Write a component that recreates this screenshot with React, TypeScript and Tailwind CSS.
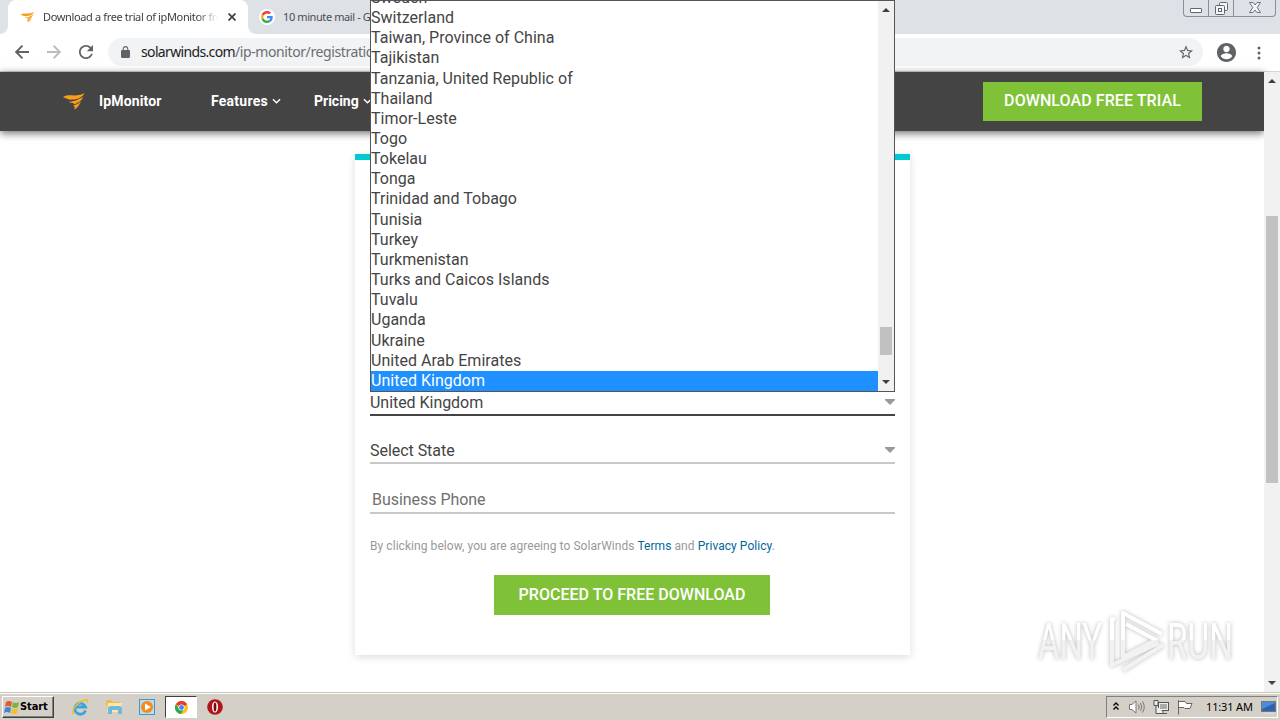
import React from "react";

const countries = [
    "Sweden",
    "Switzerland",
    "Taiwan, Province of China",
    "Tajikistan",
    "Tanzania, United Republic of",
    "Thailand",
    "Timor-Leste",
    "Togo",
    "Tokelau",
    "Tonga",
    "Trinidad and Tobago",
    "Tunisia",
    "Turkey",
    "Turkmenistan",
    "Turks and Caicos Islands",
    "Tuvalu",
    "Uganda",
    "Ukraine",
    "United Arab Emirates",
    "United Kingdom",
];

const tahoma = "font-['Noto_Sans',sans-serif]";
const roboto = "font-[Roboto,sans-serif]";

const SolarLogo: React.FC<{ className?: string }> = ({ className }) => (
    <svg viewBox="0 0 26 20" className={className} fill="#f99d1c">
        <path d="M1 6C5 3 9 4 13 4C18 4 22 3 24.500 1C23 5 18 8.500 11 8.500C7 9 5 7 1 6Z" />
        <path d="M7 11C13 11 19 8 23 5.500C22 9 18 12 14 13.500C12 11.500 9 12 7 11Z" />
        <path d="M12 15C16 14 18 12.500 20.500 10.500C19 14 17 17 13.500 19.500C14 17 14 16 12 15Z" />
    </svg>
);

const Arrow: React.FC<{ up?: boolean }> = ({ up }) => (
    <svg viewBox="0 0 8 4" className="w-2 h-1" fill="#404040">
        <path d={up ? "M0 4L4 0L8 4Z" : "M0 0H8L4 4Z"} />
    </svg>
);

const GoogleG: React.FC = () => (
    <svg viewBox="0 0 48 48" className="w-3 h-3">
        <path fill="#ea4335" d="M24 9.5c3.54 0 6.71 1.22 9.21 3.6l6.85-6.85C35.9 2.38 30.47 0 24 0 14.62 0 6.51 5.38 2.56 13.22l7.98 6.19C12.43 13.72 17.74 9.5 24 9.5z" />
        <path fill="#4285f4" d="M46.98 24.55c0-1.57-.15-3.09-.38-4.55H24v9.02h12.94c-.58 2.96-2.26 5.48-4.78 7.18l7.73 6c4.51-4.18 7.09-10.36 7.09-17.65z" />
        <path fill="#fbbc05" d="M10.53 28.59c-.48-1.45-.76-2.99-.76-4.59s.27-3.14.76-4.59l-7.98-6.19C.92 16.46 0 20.12 0 24c0 3.88.92 7.54 2.56 10.78l7.97-6.19z" />
        <path fill="#34a853" d="M24 48c6.48 0 11.93-2.13 15.89-5.81l-7.73-6c-2.15 1.45-4.92 2.3-8.16 2.3-6.26 0-11.57-4.22-13.47-9.91l-7.98 6.19C6.51 42.62 14.62 48 24 48z" />
    </svg>
);

const TabStrip: React.FC = () => (
    <div className="h-[34px] bg-[#dee1e6] flex shrink-0 overflow-hidden">
        <div className="w-2 bg-white shrink-0">
            <div className="h-full bg-[#dee1e6] rounded-br-lg" />
        </div>
        <div className="w-[240px] h-full bg-white rounded-t-lg flex items-center shrink-0">
            <SolarLogo className="w-[15px] h-3 ml-3" />
            <div className={`${tahoma} ml-2 w-[175px] text-[11px] tracking-[-0.36px] whitespace-nowrap overflow-hidden text-[#3c4043] mask-r-from-88%`}>
                Download a free trial of ipMonitor from
            </div>
            <svg viewBox="0 0 8 8" className="w-2 h-2 ml-[10px]" stroke="#3c4043" strokeWidth="1.7">
                <path d="M0.5 0.5L7.5 7.5M7.5 0.5L0.5 7.5" />
            </svg>
        </div>
        <div className="w-[122px] bg-white shrink-0">
            <div className="h-full bg-[#dee1e6] rounded-bl-lg flex items-center overflow-hidden">
                <div className="ml-[11px] w-4 h-4 rounded-full bg-white flex items-center justify-center shrink-0">
                    <GoogleG />
                </div>
                <span className={`${tahoma} ml-2 text-[11px] tracking-[-0.4px] whitespace-nowrap text-[#4a4d51]`}>10 minute mail - Go</span>
            </div>
        </div>
        <div className="ml-auto mr-[4px] h-[17px] w-[93px] flex shrink-0 border border-t-0 border-[#8a8f99] rounded-b-[4px]">
            <div className="w-[25px] border-r border-[#8a8f99] flex justify-center">
                <div className="mt-2 w-3 h-[5px] border border-[#606570] rounded-[1px] bg-white" />
            </div>
            <div className="w-[25px] border-r border-[#8a8f99] flex justify-center">
                <svg viewBox="0 0 13 13" className="w-[13px] h-[13px] mt-[2px]" fill="#f4f5f7" stroke="#606570">
                    <rect x="4.5" y="0.5" width="8" height="8" rx="1" />
                    <rect x="0.5" y="3.5" width="9" height="9" rx="1" />
                    <rect x="3.5" y="6.5" width="3" height="3" />
                </svg>
            </div>
            <div className="flex-1 flex justify-center">
                <svg viewBox="0 0 12 11" className="w-3 h-[11px] mt-[2px]" fill="#f4f5f7" stroke="#606570" strokeWidth="0.9">
                    <path d="M0.5 0.5H4L6 3L8 0.5H11.5L8.2 5.5L11.5 10.5H8L6 8L4 10.5H0.5L3.8 5.5Z" />
                </svg>
            </div>
        </div>
    </div>
);

const Toolbar: React.FC = () => (
    <div className="h-[38px] bg-white flex items-center shrink-0 border-b border-[#d5d7da]">
        <svg viewBox="0 0 14 14" className="w-[14px] h-[14px] ml-[15px] -mt-[2px]" fill="none" stroke="#5f6368" strokeWidth="1.9">
            <path d="M14 7H1.5M7.5 0.7L1.2 7L7.5 13.3" />
        </svg>
        <svg viewBox="0 0 14 14" className="w-[14px] h-[14px] ml-[18px] -mt-[2px]" fill="none" stroke="#babcbe" strokeWidth="1.9">
            <path d="M0 7H12.5M6.5 0.7L12.8 7L6.5 13.3" />
        </svg>
        <svg viewBox="4 4 16 16" className="w-[14px] h-[14px] ml-[18px] -mt-[2px]" fill="#5f6368">
            <path d="M17.65 6.35C16.2 4.9 14.21 4 12 4c-4.42 0-7.99 3.58-7.99 8s3.57 8 7.99 8c3.73 0 6.84-2.55 7.73-6h-2.08c-.82 2.33-3.04 4-5.65 4-3.31 0-6-2.69-6-6s2.69-6 6-6c1.66 0 3.14.69 4.22 1.78L13 11h7V4l-2.35 2.35z" />
        </svg>
        <div className="ml-[15px] -mt-px w-[1095px] h-7 rounded-full bg-[#f1f3f4] flex items-center">
            <svg viewBox="4 1 16 21" className="w-[9px] h-3 ml-[13px] -mt-px shrink-0" fill="#5f6368">
                <path d="M18 8h-1V6c0-2.76-2.24-5-5-5S7 3.240 7 6v2H6c-1.100 0-2 .9-2 2v10c0 1.100.9 2 2 2h12c1.100 0 2-.9 2-2V10c0-1.100-.9-2-2-2zM15.100 8H8.900V6c0-1.710 1.390-3.100 3.100-3.100s3.100 1.390 3.100 3.100v2z" />
            </svg>
            <span className={`${tahoma} ml-[11px] -mt-px w-[229px] overflow-hidden text-[14px] tracking-[-0.4px] whitespace-nowrap text-[#6a6e73]`}>
                <span className="text-[#202124] tracking-[-0.65px]">solarwinds.com</span>/ip-monitor/registration
            </span>
            <svg viewBox="2 2 20 19" className="w-[14px] h-[14px] ml-auto mr-[10px] -mt-px" fill="#5f6368">
                <path d="M22 9.240l-7.190-.62L12 2 9.190 8.630 2 9.240l5.460 4.730L5.820 21 12 17.270 18.180 21l-1.630-7.030L22 9.240zM12 15.400l-3.760 2.270 1-4.280-3.320-2.880 4.380-.38L12 6.100l1.710 4.040 4.380.38-3.320 2.880 1 4.280L12 15.400z" />
            </svg>
        </div>
        <svg viewBox="2 2 20 20" className="w-[19px] h-[19px] ml-[14px] -mt-px" fill="#5f6368">
            <path d="M12 2C6.480 2 2 6.480 2 12s4.480 10 10 10 10-4.480 10-10S17.520 2 12 2zm0 3c1.900 0 3.400 1.500 3.400 3.400S13.900 11.800 12 11.800 8.600 10.300 8.600 8.400 10.100 5 12 5zm0 14.200c-2.500 0-4.710-1.280-6-3.220.03-1.990 4-3.080 6-3.080s5.970 1.090 6 3.080c-1.290 1.940-3.500 3.220-6 3.220z" />
        </svg>
        <svg viewBox="0 0 4 14" className="w-1 h-[14px] ml-[21px]" fill="#5f6368">
            <circle cx="2" cy="2" r="1.5" />
            <circle cx="2" cy="7" r="1.5" />
            <circle cx="2" cy="12" r="1.5" />
        </svg>
    </div>
);

const Chevron: React.FC = () => (
    <svg viewBox="0 0 10 6" className="w-[9px] h-[6px] ml-1" fill="none" stroke="#fff" strokeWidth="1.5">
        <path d="M1 1L5 5L9 1" />
    </svg>
);

const SelectField: React.FC<{ value: string; active?: boolean }> = ({ value, active }) => (
    <div className={`h-[27px] flex items-center justify-between border-b-2 ${active ? "border-[#444]" : "border-[#c8c8c8]"}`}>
        <span className="pt-[2px] text-base tracking-[-0.04px] text-[#444]">{value}</span>
        <svg viewBox="0 0 10 6" className="w-[10px] h-[6px]" fill="#999">
            <path d="M0 0H10V1L5 6L0 1Z" />
        </svg>
    </div>
);

const CountryList: React.FC = () => (
    <div className="absolute left-[370px] top-0 w-[525px] h-[392px] border border-[#555] bg-white flex overflow-hidden">
        <div className="flex-1 flex flex-col justify-end overflow-hidden">
            {countries.map((name) => (
                <div
                    key={name}
                    className={`h-[20.16px] shrink-0 leading-[19px] text-base tracking-[0.02px] whitespace-nowrap ${name === "United Kingdom" ? "bg-[#1e90ff] text-white" : "text-[#444]"}`}
                >
                    {name}
                </div>
            ))}
        </div>
        <div className="w-4 bg-[#f1f1f1] flex flex-col items-center shrink-0 pt-[7px] pb-[7px]">
            <Arrow up />
            <div className="mt-auto w-3 h-7 bg-[#c1c1c1]" />
            <div className="mt-[25px] flex"><Arrow /></div>
        </div>
    </div>
);

const Watermark: React.FC = () => (
    <svg viewBox="0 0 210 76" className="absolute left-[1030px] top-[602px] w-[210px] h-[76px] drop-shadow-[0_0_2px_rgba(0,0,0,0.28)]">
        <defs>
            <linearGradient id="fade" gradientUnits="userSpaceOnUse" x1="0" y1="0" x2="0" y2="76">
                <stop offset="0.5" stopColor="#fff" />
                <stop offset="0.5" stopColor="#f2f2f2" />
            </linearGradient>
        </defs>
        <g fill="url(#fade)" fontFamily="Roboto, sans-serif" fontSize="50">
            <text x="8" y="57" textLength="64" lengthAdjust="spacingAndGlyphs">ANY</text>
            <text x="137" y="57" textLength="66" lengthAdjust="spacingAndGlyphs">RUN</text>
        </g>
        <g fill="none" stroke="url(#fade)" strokeWidth="4" strokeLinejoin="round">
            <path d="M132 32L93 11V55L126 38L96 22" />
            <path d="M85 17H82V63L129 41" />
            <path d="M93 68L133 43" />
        </g>
    </svg>
);

const Taskbar: React.FC = () => (
    <div className="h-7 bg-[#d4d0c8] border-t border-[#c8c5bc] flex items-center shrink-0 shadow-[inset_0_1px_0_#fff]">
        <div className="ml-[2px] mt-px w-[52px] h-[22px] flex items-center bg-[#d4d0c8] border border-t-white border-l-white border-r-[#404040] border-b-[#404040] shadow-[inset_-1px_-1px_0_#808080]">
            <svg viewBox="0 0 16 16" className="w-4 h-4 ml-px shrink-0">
                <path d="M2 3Q5 1 8 3L7 8Q4 6 1 8Z" fill="#e7582c" />
                <path d="M9 3Q12 5 15 3L14 8Q11 10 8 8Z" fill="#78b643" />
                <path d="M1 9Q4 7 7 9L6 14Q3 12 0 14Z" fill="#3c89d0" />
                <path d="M8 9Q11 11 14 9L13 14Q10 16 7 14Z" fill="#f5bd2f" />
            </svg>
            <span className="font-['DejaVu_Sans_Condensed','DejaVu_Sans',sans-serif] text-[11px] font-bold tracking-[-0.1px] text-black">Start</span>
        </div>
        <svg viewBox="0 0 18 18" className="w-[18px] h-[18px] ml-[17px]" fill="none">
            <path d="M14.500 12.500A5.500 5.500 0 1 1 14.500 9H5" stroke="#3ba4df" strokeWidth="2.800" />
            <path d="M3 16C-2 15 6 4 14 2Q18 1 16 5" stroke="#efbd35" strokeWidth="1.500" />
        </svg>
        <svg viewBox="0 0 18 18" className="w-[18px] h-[18px] ml-4">
            <path d="M1 2H6L8 4H15V14H2Z" fill="#e3bd55" />
            <path d="M3 5H17L15 14H2Z" fill="#ffe9a2" />
            <path d="M3 16V11Q3 8 6 8H14Q17 8 17 11V16H13V12H7V16Z" fill="#70b8de" />
        </svg>
        <svg viewBox="0 0 16 16" className="w-4 h-4 ml-4">
            <rect x="0.5" y="0.5" width="15" height="15" fill="#b9dcf3" stroke="#4e91c5" />
            <circle cx="8" cy="8" r="6" fill="#f28b1d" />
            <path d="M6 4.500L12 8L6 11.500Z" fill="#fff" />
        </svg>
        <div className="ml-[10px] mt-px w-8 h-[22px] flex items-center justify-center bg-white border border-t-[#404040] border-l-[#404040] border-r-white border-b-white">
            <svg viewBox="0 0 14 14" className="w-[13px] h-[13px]">
                <circle cx="7" cy="7" r="7" fill="#fbc116" />
                <path d="M7 7L0.900 3.500A7 7 0 0 1 13.100 3.500Z" fill="#e33b2e" />
                <path d="M0.900 3.500A7 7 0 0 0 6.500 14L9.500 8.500L4 8Z" fill="#2da94f" />
                <circle cx="7" cy="7" r="3.300" fill="#fff" />
                <circle cx="7" cy="7" r="2.600" fill="#4285f4" />
            </svg>
        </div>
        <svg viewBox="0 0 16 16" className="w-4 h-4 ml-[10px]">
            <circle cx="8" cy="8" r="7.800" fill="#b3141a" />
            <ellipse cx="8" cy="8" rx="3" ry="5.500" fill="#fff" />
            <ellipse cx="8" cy="8" rx="1.400" ry="4.500" fill="#7d080c" />
        </svg>
        <div className="ml-auto mr-[2px] mt-px w-[172px] h-[22px] flex items-center border border-t-[#808080] border-l-[#808080] border-r-white border-b-white">
            <svg viewBox="0 0 6 8" className="w-[6px] h-2 ml-[6px] -mt-[2px]" fill="none" stroke="#000" strokeWidth="1.300">
                <path d="M0.500 3.500L3 1L5.500 3.500M0.500 7.500L3 5L5.500 7.500" />
            </svg>
            <svg viewBox="0 0 16 14" className="w-4 h-[14px] ml-[10px]" fill="none" stroke="#777">
                <path d="M0.500 4.500H3L7 1V13L3 9.500H0.500Z" fill="#fff" />
                <path d="M9.500 4.500Q11 7 9.500 9.500M11.500 3Q14 7 11.500 11M13.500 1.500Q17 7 13.500 12.500" />
            </svg>
            <svg viewBox="0 0 16 16" className="w-4 h-4 ml-2" fill="#eee" stroke="#555">
                <rect x="5.500" y="3.500" width="10" height="8" />
                <rect x="7.500" y="5.500" width="6" height="4" fill="#aaa" stroke="#aaa" />
                <path d="M1 1.500H5V6.500H1ZM3 7V14.500H12.500M10 12V14M7 14.500H14" />
            </svg>
            <svg viewBox="0 0 16 16" className="w-4 h-4 ml-2" fill="#fff" stroke="#666">
                <path d="M1.500 1V15.500M2 2.500H8L9.500 4.500H15L13 9.500H8L7 8.500H2" />
            </svg>
            <span className={`${tahoma} ml-[13px] text-[11px] tracking-[-0.15px] text-black whitespace-nowrap`}>11:31 AM</span>
            <svg viewBox="0 0 15 13" className="w-[15px] h-[13px] ml-auto mr-px">
                <rect x="0.500" y="0.500" width="14" height="10" fill="#2c63b4" stroke="#777" />
                <path d="M1 8L14 2V1H1Z" fill="#4d8dd8" />
                <path d="M2 12.500H13" stroke="#ddd" />
            </svg>
        </div>
    </div>
);

const App: React.FC = () => {
    return (
        <div className={`${roboto} relative w-[1280px] h-[720px] overflow-hidden flex flex-col bg-white`}>
            <TabStrip />
            <Toolbar />

            <div className="h-[620px] flex shrink-0">
                <div className="w-[1264px] flex flex-col">
                    <nav className="h-[59px] pb-px bg-[#444] flex items-center text-white text-sm font-bold shrink-0 shadow-[0_2px_8px_rgba(0,0,0,0.6)]">
                        <SolarLogo className="w-[24px] h-5 ml-[62px]" />
                        <span className="ml-[13px] w-[112px] tracking-[0.15px]">IpMonitor</span>
                        <span className="w-[103px] flex items-center tracking-[0.25px]">Features<Chevron /></span>
                        <span className="flex items-center">Pricing<Chevron /></span>
                        <button className="ml-auto mr-[62px] w-[219px] h-[39px] bg-[#7fc238] text-base font-medium tracking-[0.08px]">
                            DOWNLOAD FREE TRIAL
                        </button>
                    </nav>

                    <div className="mt-[23px] ml-[355px] w-[555px] h-[501px] border-t-[6px] border-[#00c9d0] px-[15px] flex flex-col shadow-[0_2px_8px_rgba(0,0,0,0.14)]">
                        <div className="mt-[229px]">
                            <SelectField value="United Kingdom" active />
                        </div>
                        <div className="mt-[21px]">
                            <SelectField value="Select State" />
                        </div>
                        <div className="mt-[23px] h-[27px] pl-[2px] border-b-2 border-[#c8c8c8] text-base leading-[26px] tracking-[-0.04px] text-[#707070]">
                            Business Phone
                        </div>
                        <p className="mt-6 text-xs leading-4 tracking-[0.06px] text-[#999] whitespace-nowrap">
                            By clicking below, you are agreeing to SolarWinds <a className="text-[#006699]">Terms</a> and <a className="text-[#006699]">Privacy Policy</a>.
                        </p>
                        <button className="mt-[21px] ml-[124px] w-[276px] h-10 bg-[#7fc238] text-white text-base font-medium tracking-[0.02px] shrink-0">
                            PROCEED TO FREE DOWNLOAD
                        </button>
                    </div>
                </div>

                <div className="w-4 bg-[#f1f1f1] flex flex-col items-center pt-[7px] pb-[7px]">
                    <Arrow up />
                    <div className="mt-[133px] w-3 h-[267px] bg-[#c1c1c1]" />
                    <div className="mt-auto flex"><Arrow /></div>
                </div>
            </div>

            <Taskbar />
            <CountryList />
            <Watermark />
        </div>
    );
};

export default App;
